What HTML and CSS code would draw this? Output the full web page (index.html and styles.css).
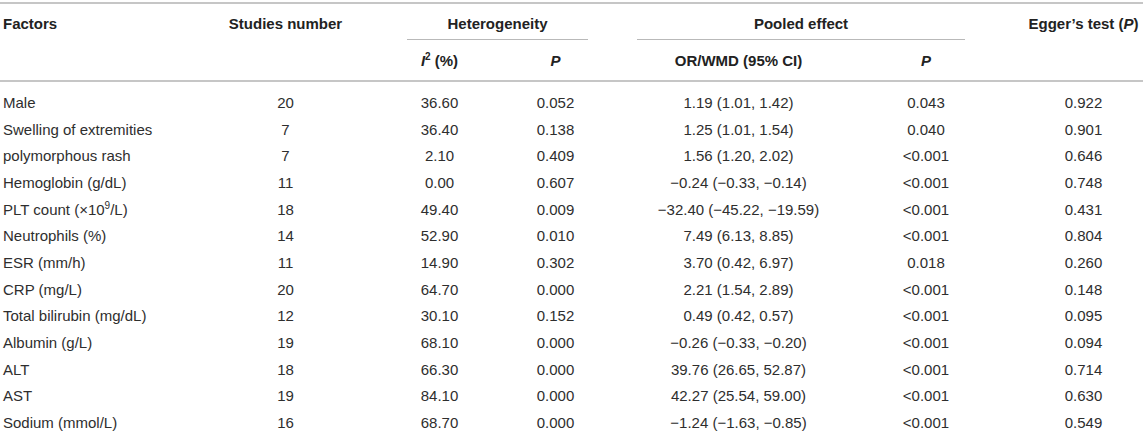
FILE: index.html
```html
<!DOCTYPE html>
<html lang="en">
<head>
<meta charset="utf-8">
<title>Factors table</title>
<link rel="stylesheet" href="styles.css">
</head>
<body>
<table class="tbl">
  <colgroup>
    <col class="c-factor">
    <col class="c-studies">
    <col class="c-i2">
    <col class="c-p">
    <col class="c-or">
    <col class="c-p2">
    <col class="c-egger">
  </colgroup>
  <thead>
    <tr class="h1">
      <th class="left">Factors</th>
      <th>Studies number</th>
      <th colspan="2" class="group"><div class="group-line group-het">Heterogeneity</div></th>
      <th colspan="2" class="group"><div class="group-line group-pool">Pooled effect</div></th>
      <th class="egger">Egger’s test (<i>P</i>)</th>
    </tr>
    <tr class="h2">
      <th class="left"></th>
      <th></th>
      <th><i>I</i><sup>2</sup> (%)</th>
      <th><i>P</i></th>
      <th>OR/WMD (95% CI)</th>
      <th><i>P</i></th>
      <th class="egger"></th>
    </tr>
  </thead>
  <tbody>
    <tr><td class="left">Male</td><td>20</td><td>36.60</td><td>0.052</td><td>1.19 (1.01, 1.42)</td><td>0.043</td><td class="egger">0.922</td></tr>
    <tr><td class="left">Swelling of extremities</td><td>7</td><td>36.40</td><td>0.138</td><td>1.25 (1.01, 1.54)</td><td>0.040</td><td class="egger">0.901</td></tr>
    <tr><td class="left">polymorphous rash</td><td>7</td><td>2.10</td><td>0.409</td><td>1.56 (1.20, 2.02)</td><td>&lt;0.001</td><td class="egger">0.646</td></tr>
    <tr><td class="left">Hemoglobin (g/dL)</td><td>11</td><td>0.00</td><td>0.607</td><td>−0.24 (−0.33, −0.14)</td><td>&lt;0.001</td><td class="egger">0.748</td></tr>
    <tr><td class="left">PLT count (×10<sup>9</sup>/L)</td><td>18</td><td>49.40</td><td>0.009</td><td>−32.40 (−45.22, −19.59)</td><td>&lt;0.001</td><td class="egger">0.431</td></tr>
    <tr><td class="left">Neutrophils (%)</td><td>14</td><td>52.90</td><td>0.010</td><td>7.49 (6.13, 8.85)</td><td>&lt;0.001</td><td class="egger">0.804</td></tr>
    <tr><td class="left">ESR (mm/h)</td><td>11</td><td>14.90</td><td>0.302</td><td>3.70 (0.42, 6.97)</td><td>0.018</td><td class="egger">0.260</td></tr>
    <tr><td class="left">CRP (mg/L)</td><td>20</td><td>64.70</td><td>0.000</td><td>2.21 (1.54, 2.89)</td><td>&lt;0.001</td><td class="egger">0.148</td></tr>
    <tr><td class="left">Total bilirubin (mg/dL)</td><td>12</td><td>30.10</td><td>0.152</td><td>0.49 (0.42, 0.57)</td><td>&lt;0.001</td><td class="egger">0.095</td></tr>
    <tr><td class="left">Albumin (g/L)</td><td>19</td><td>68.10</td><td>0.000</td><td>−0.26 (−0.33, −0.20)</td><td>&lt;0.001</td><td class="egger">0.094</td></tr>
    <tr><td class="left">ALT</td><td>18</td><td>66.30</td><td>0.000</td><td>39.76 (26.65, 52.87)</td><td>&lt;0.001</td><td class="egger">0.714</td></tr>
    <tr><td class="left">AST</td><td>19</td><td>84.10</td><td>0.000</td><td>42.27 (25.54, 59.00)</td><td>&lt;0.001</td><td class="egger">0.630</td></tr>
    <tr><td class="left">Sodium (mmol/L)</td><td>16</td><td>68.70</td><td>0.000</td><td>−1.24 (−1.63, −0.85)</td><td>&lt;0.001</td><td class="egger">0.549</td></tr>
  </tbody>
</table>
</body>
</html>
```
FILE: styles.css
```css
html, body {
  margin: 0;
  padding: 0;
  background: #ffffff;
  overflow: hidden;
}

body {
  font-family: "Liberation Sans", Arial, Helvetica, sans-serif;
  font-size: 15px;
  color: #2e2e2e;
}

.tbl {
  width: 1143px;
  margin-top: 2px;
  border-collapse: collapse;
  table-layout: fixed;
}

.c-factor { width: 190px; }
.c-studies { width: 191px; }
.c-i2 { width: 117px; }
.c-p { width: 115px; }
.c-or { width: 251px; }
.c-p2 { width: 124px; }
.c-egger { width: 155px; }

th, td {
  padding: 0;
  text-align: center;
  white-space: nowrap;
}

th {
  font-weight: bold;
  color: #222222;
}

.left {
  text-align: left;
  padding-left: 3px;
}

.egger {
  padding-left: 36px;
}

.h1 th {
  border-top: 2px solid #c6c6c6;
  height: 36px;
  line-height: 18px;
  vertical-align: top;
  padding-top: 11px;
  box-sizing: border-box;
}

.group-line {
  line-height: 18px;
  padding-bottom: 6px;
  border-bottom: 1px solid #b9b9b9;
}

.group-het {
  margin: 0 25px 0 26px;
}

.group-pool {
  margin: 0 23px 0 24px;
}

.h2 th {
  height: 40px;
  line-height: 18px;
  padding-top: 12px;
  padding-bottom: 10px;
  border-bottom: 2px solid #c6c6c6;
  box-sizing: border-box;
}

sup {
  font-size: 10px;
  line-height: 0;
  vertical-align: 6px;
}

td {
  line-height: 26.67px;
  height: 26.67px;
}

tbody tr:first-child td {
  padding-top: 8px;
}
```
